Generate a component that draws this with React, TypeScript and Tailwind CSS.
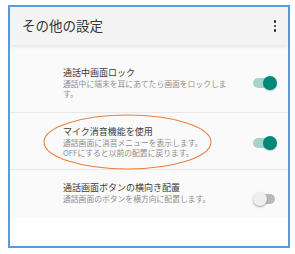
import React from 'react'

type RowProps = {
    title: string
    lines: string[]
    on: boolean
    rowClass: string
    toggleClass: string
}

function Toggle({ on }: { on: boolean }) {
    if (on) {
        return (
            <div className="relative h-[14px] w-[24px]">
                <div className="absolute left-0 top-[2px] h-[10px] w-[22px] rounded-full bg-[#a6d4cb]" />
                <div className="absolute right-0 top-0 h-[14px] w-[14px] rounded-full bg-[#00897b] shadow-[0_1px_1px_rgba(0,0,0,0.25)]" />
            </div>
        )
    }
    return (
        <div className="relative h-[14px] w-[24px]">
            <div className="absolute right-[2px] top-[2px] h-[10px] w-[20px] rounded-full bg-[#b9b9b9]" />
            <div className="absolute left-0 top-0 h-[14px] w-[14px] rounded-full bg-[#efefef] shadow-[0_1px_2px_rgba(0,0,0,0.35)]" />
        </div>
    )
}

function SettingRow({ title, lines, on, rowClass, toggleClass }: RowProps) {
    return (
        <div className={`flex items-start pl-[53px] pr-[11px] ${rowClass}`}>
            <div className="flex-1">
                <div className="text-[9px] leading-[12px] text-[#3a3a3a]">{title}</div>
                {lines.map((l) => (
                    <div key={l} className="text-[7.8px] leading-[9.5px] text-[#8e8e8e]">{l}</div>
                ))}
            </div>
            <div className={toggleClass}>
                <Toggle on={on} />
            </div>
        </div>
    )
}

export default function App() {
    return (
        <div className="h-[254px] w-[295px] bg-white pl-[8px] pt-[5px]" style={{ fontFamily: '"Noto Sans CJK JP", "Noto Sans", sans-serif' }}>
            <div className="relative h-[243px] w-[282px] border-2 border-[#5a9be0] bg-white">
                {/* Header */}
                <div className="relative z-10 flex h-[38px] items-center justify-between bg-[#f4f4f4] pl-[12px] pr-[12px] shadow-[0_2px_3px_rgba(0,0,0,0.08)]">
                    <span className="text-[13.5px] leading-none text-[#333333]">その他の設定</span>
                    <div className="flex flex-col gap-[2px]">
                        <span className="h-[2.5px] w-[2.5px] rounded-full bg-[#222]" />
                        <span className="h-[2.5px] w-[2.5px] rounded-full bg-[#222]" />
                        <span className="h-[2.5px] w-[2.5px] rounded-full bg-[#222]" />
                    </div>
                </div>

                {/* Settings list */}
                <div className="bg-[#fafafa] pt-[3px]">
                    <SettingRow
                        title="通話中画面ロック"
                        lines={['通話中に端末を耳にあてたら画面をロックしま', 'す。']}
                        on={true}
                        rowClass="pt-[19px] pb-[14px]"
                        toggleClass="mt-[9px]"
                    />
                    <div className="h-px bg-[#e8e8e8]" />
                    <SettingRow
                        title="マイク消音機能を使用"
                        lines={['通話画面に消音メニューを表示します。', 'OFFにすると以前の配置に戻ります。']}
                        on={true}
                        rowClass="pt-[13px] pb-[12px]"
                        toggleClass="mt-[10px]"
                    />
                    <div className="h-px bg-[#e8e8e8]" />
                    <SettingRow
                        title="通話画面ボタンの横向き配置"
                        lines={['通話画面のボタンを横方向に配置します。']}
                        on={false}
                        rowClass="pt-[12px] pb-[12px]"
                        toggleClass="mt-[10px]"
                    />
                </div>

                {/* Highlight ellipse */}
                <svg className="pointer-events-none absolute left-0 top-0" width="282" height="243" viewBox="0 0 282 243">
                    <ellipse cx="117.5" cy="135" rx="83.5" ry="27" fill="none" stroke="#e8803f" strokeWidth="1.1" />
                </svg>
            </div>
        </div>
    )
}
